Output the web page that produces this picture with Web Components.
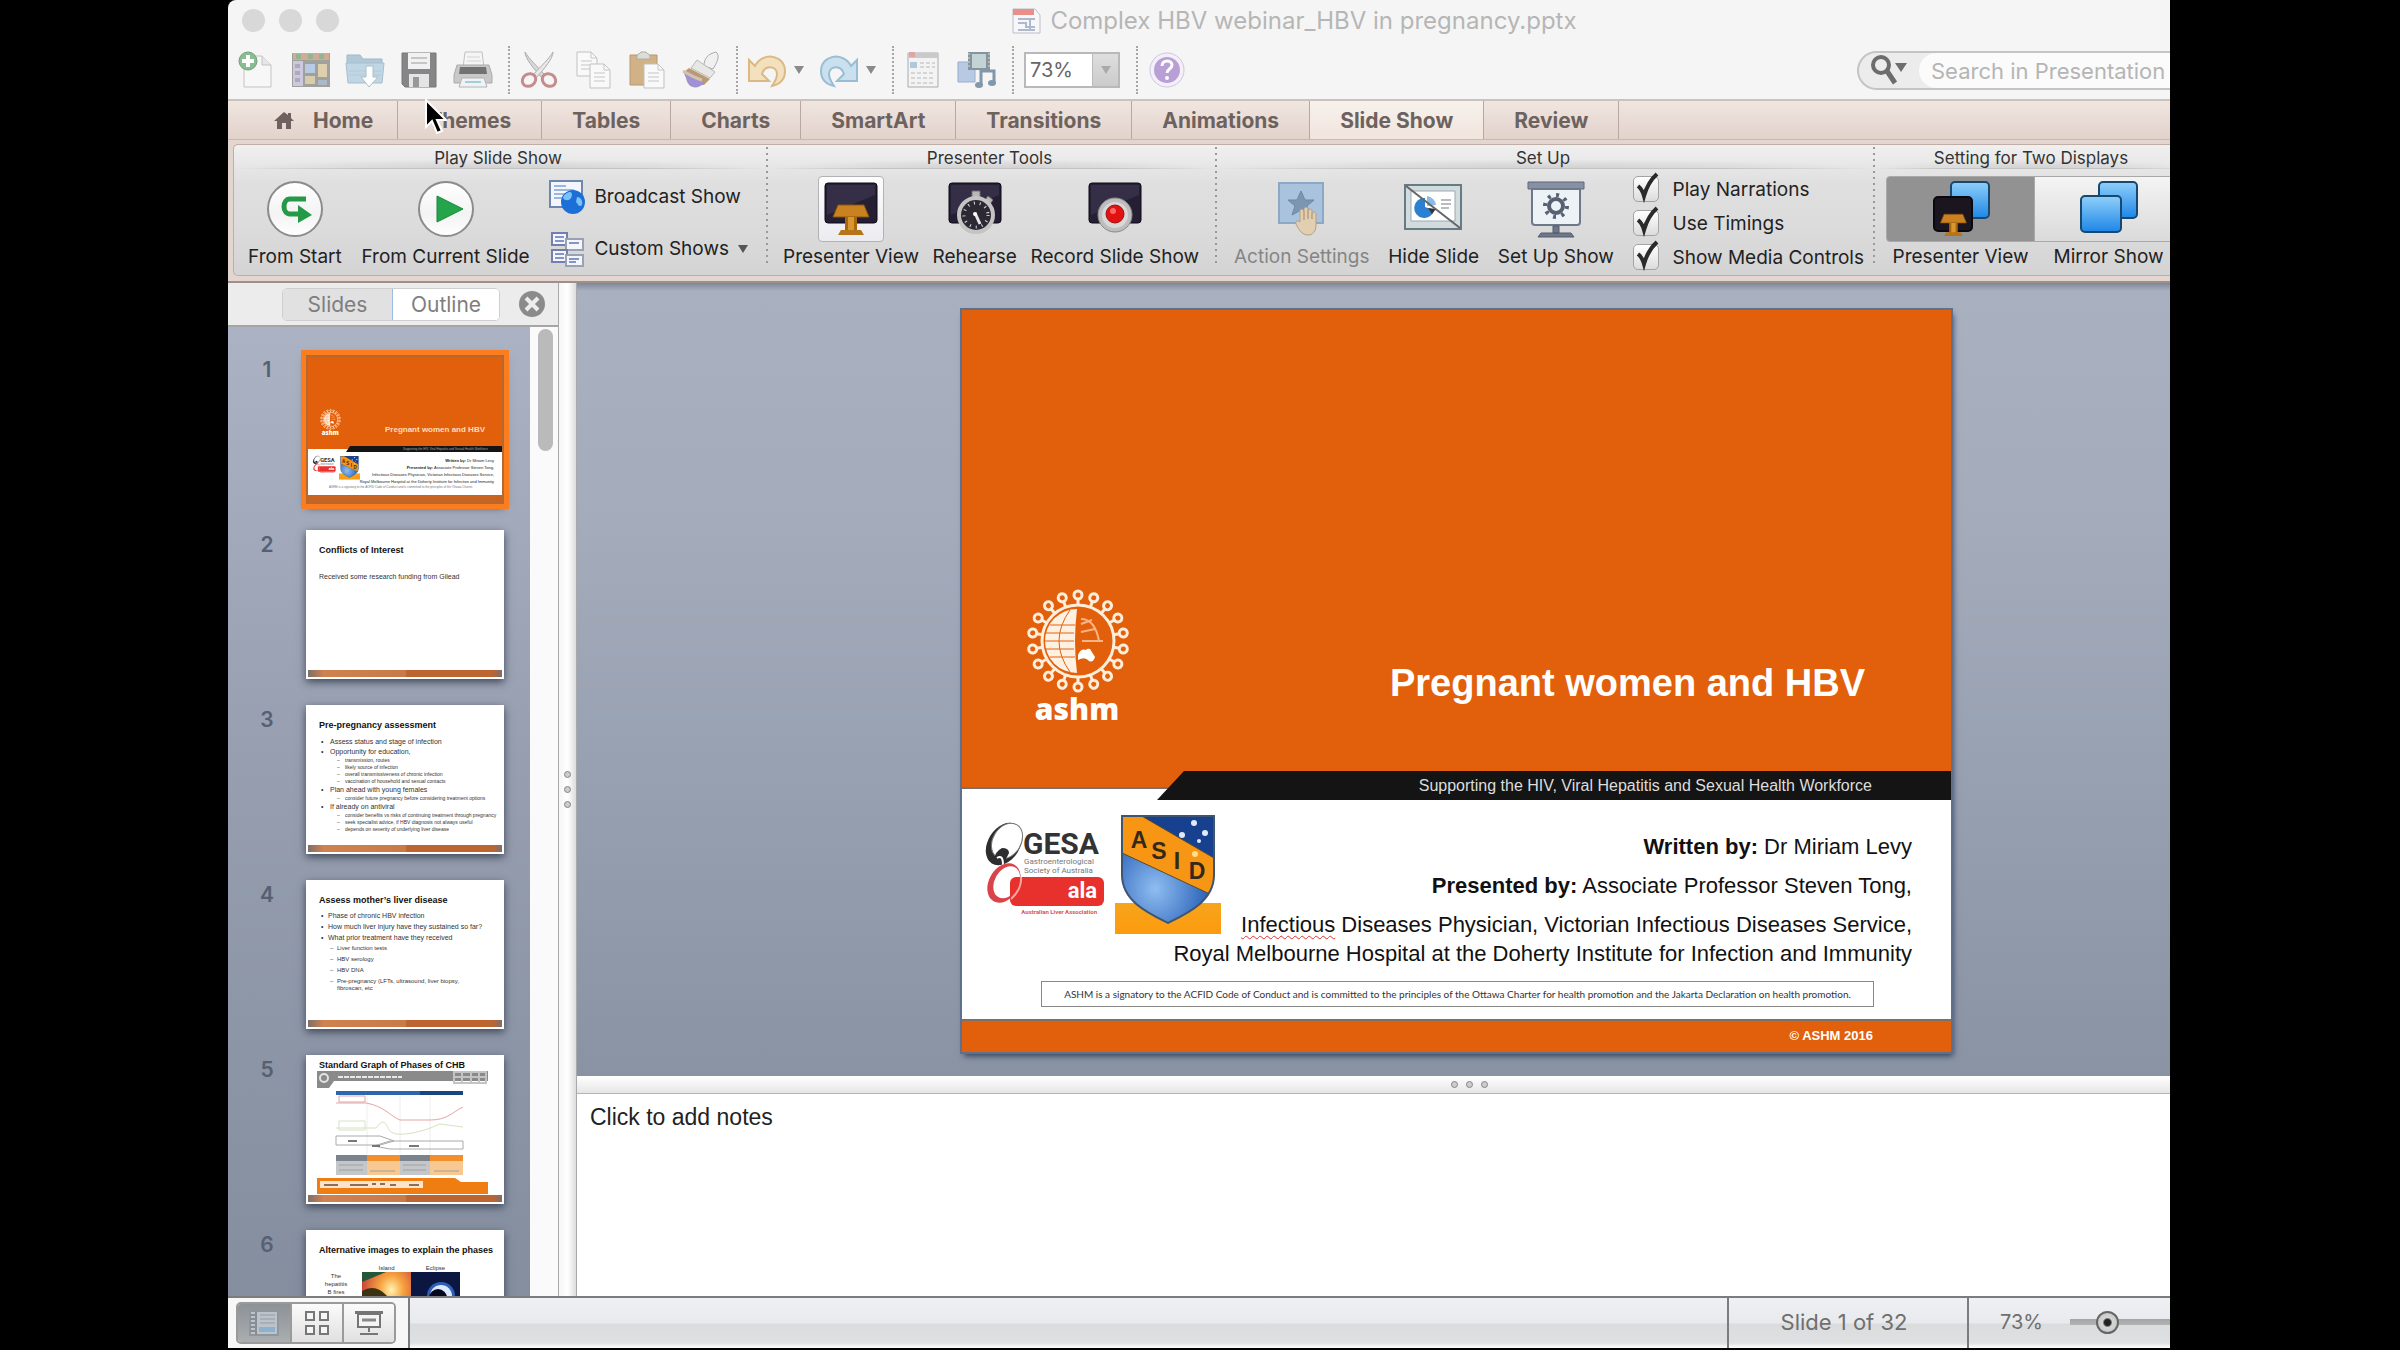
<!DOCTYPE html>
<html lang="en">
<head>
<meta charset="utf-8">
<title>Complex HBV webinar_HBV in pregnancy.pptx</title>
<style>
  body {
    margin: 0;
    background: #000;
    font-family: Inter, "Liberation Sans", sans-serif;
    --ui-size: 19px;
    --title-size: 24px;
    --status-size: 20px;
    --orange: #e2600c;
    --rule: #bfaea6;
  }
</style>
</head>
<body>
<app-window></app-window>

<script>
const define = (name, html, setup) => {
  const template = document.createElement("template");
  template.innerHTML = html;
  customElements.define(
    name,
    class extends HTMLElement {
      connectedCallback() {
        if (this.shadowRoot) return;
        this.attachShadow({ mode: "open" });
        this.shadowRoot.appendChild(template.content.cloneNode(true));
        if (setup) setup(this, this.shadowRoot);
      }
    }
  );
};

/* ---------- icons ---------- */

const podium = `
  <path d="M14 24h26l5 12H9z" fill="#c9821f" stroke="#8a5410"/>
  <path d="M21 36h12v14H21z" fill="#a9660f"/>
  <path d="M24 36h6v14h-6z" fill="#d9952e"/>
  <path d="M17 49h20l3 5H14z" fill="#b87418"/>`;
const screen = `<rect x="1" y="2" width="52" height="40" rx="3" fill="#251f33" stroke="#0f0b18"/><path d="M3 4h48v10L3 34z" fill="#3b3450" opacity=".7"/>`;
const page = (x, y) => `<path d="M${x} ${y}h14l6 6v18h-20z" fill="#fafafa" stroke="#b5b5b5"/><path d="M${x + 14} ${y}v6h6M${x + 4} ${y + 9}h11M${x + 4} ${y + 13}h11M${x + 4} ${y + 17}h11" fill="none" stroke="#bbb"/>`;
const blueScreens = `<rect x="20" y="1" width="38" height="36" rx="4" fill="url(#blue)" stroke="#19486f" stroke-width="2"/>`;
const blueDef = `<defs><linearGradient id="blue" x2="0" y2="1"><stop stop-color="#8fd0fa"/><stop offset="1" stop-color="#1e86e6"/></linearGradient></defs>`;
const disc = `<circle cx="28" cy="28" r="27" fill="url(#w)" stroke="#8b8b8b" stroke-width="2"/><defs><linearGradient id="w" x2="0" y2="1"><stop stop-color="#fff"/><stop offset=".6" stop-color="#f3f3f3"/><stop offset="1" stop-color="#fff"/></linearGradient></defs>`;

const icons = {
  doc: [29, 26, `<path d="M1 1h22l5 6v18H1z" fill="#f7f7f9" stroke="#bcbfca"/><path d="M1 1h21v6H1z" fill="#ea8f88"/><path d="M6 11h17M6 15h8v4h9M6 22h17M18 11v11" stroke="#aeb9d0" stroke-width="2" fill="none"/>`],
  newdoc: [38, 38, `<path d="M6 5h18l9 9v22H6z" fill="#f8f8f8" stroke="#b8b8b8"/><path d="M24 5v9h9" fill="#e4e4e4" stroke="#b8b8b8"/><circle cx="10" cy="10" r="9" fill="#6fae77" stroke="#4d8f58"/><path d="M10 4v12M4 10h12" stroke="#fff" stroke-width="4"/>`],
  template: [38, 38, `<path d="M0 2h38v34H0z" fill="#8b8b86"/><path d="M1 2h36v7H1z" fill="#c99a7d"/><path d="M4 3h5v5H4zM16 3h5v5h-5zM27 3h5v5h-5z" fill="#7ea37a"/><path d="M1 10h10v25H1z" fill="#c4bed8"/><path d="M3 13h5v4H3zM3 20h5v4H3zM3 27h5v4H3z" fill="#9c98b4"/><path d="M13 13h10v9H13z" fill="#a9c0e0"/><path d="M26 13h9v13h-9z" fill="#d9c79c"/><path d="M13 25h10v8H13z" fill="#d0c499"/><path d="M26 29h9v5h-9z" fill="#98a9bd"/>`],
  folder: [38, 38, `<path d="M1 8V4h13l3 4h19v5H1z" fill="#9fbdd0" stroke="#8ba9bd"/><path d="M0 12h38l-2 20H2z" fill="#b4cfe0" stroke="#93b2c6"/><path d="M3 20h32M3 24h32" stroke="#a2c0d3"/><path d="M20 15h7v11h5l-9 10-8-10h5z" fill="#fff" stroke="#9ab2c0"/>`],
  save: [38, 38, `<path d="M2 2h34v34H5l-3-3z" fill="#6b6b6d" stroke="#59595b"/><path d="M8 2h22v16H8z" fill="#f1f1f1"/><path d="M11 7h16M11 12h16" stroke="#bbb" stroke-width="2"/><path d="M9 23h20v13H9z" fill="#e0e0e0"/><path d="M13 26h6v10h-6z" fill="#808084"/>`],
  print: [38, 38, `<path d="M9 17 11 1h17l2 16z" fill="#f5f5f5" stroke="#b5b5b5"/><path d="M13 6h13M13 10h14" stroke="#ccc"/><path d="M3 14h32l3 10v8H0v-8z" fill="#bdbdbd" stroke="#999"/><path d="M6 16h26l1 7H5z" fill="#525252"/><path d="M8 27h22l3 9H5z" fill="#eef3f5" stroke="#a5a5a5"/><path d="M11 31h16" stroke="#8fc5cf" stroke-width="2"/>`],
  cut: [38, 38, `<path d="M5 1c0 6 8 16 17 26l3-3C17 15 9 8 5 1z" fill="#d2d2d2" stroke="#9b9b9b"/><path d="M33 1c0 6-8 16-17 26l-3-3C21 15 29 8 33 1z" fill="#e6e6e6" stroke="#9b9b9b"/><g fill="none" stroke="#b87473" stroke-width="3"><ellipse cx="9" cy="29" rx="7" ry="6" transform="rotate(-35 9 29)"/><ellipse cx="29" cy="29" rx="7" ry="6" transform="rotate(35 29 29)"/></g>`],
  copy: [38, 38, page(3, 1) + page(16, 13)],
  paste: [38, 38, `<path d="M2 4h27v30H2z" fill="#c9a16b" stroke="#a8814e"/><path d="M9 5c0-2 3-2 4-4h5c1 2 4 2 4 4v3H9z" fill="#d7d7d2" stroke="#a09c92"/>` + page(16, 13)],
  brush: [38, 38, `<path d="M22 15c0-8 4-12 12-14 5 4 0 12-3 17z" fill="#f0f0f0" stroke="#999"/><path d="m15 9 18 12-5 6-19-10z" fill="#e4e4e2" stroke="#aaa"/><path d="m7 17 21 11-6 6C13 34 6 27 2 21z" fill="#b08352"/><path d="M1 20c5 0 16 5 21 12-6 7-16 6-18-5z" fill="#8a79cc"/><path d="M1 20c6 3 11 7 19 9" stroke="#c9b79f" stroke-width="3" fill="none"/>`],
  undo: [38, 38, `<path d="M1 9v21h20l-7-7c3-10 15-8 15 0 0 5-2 7-5 12 9-2 13-8 13-15C37 4 15 0 7 15z" fill="#f3dcae" stroke="#d5ab68" stroke-width="2"/>`],
  redo: [38, 38, `<path d="M37 9v21H17l7-7c-3-10-15-8-15 0 0 5 2 7 5 12C5 33 1 27 1 20 1 4 23 0 31 15z" fill="#c0dced" stroke="#82b0cc" stroke-width="2"/>`],
  form: [38, 38, `<path d="M4 2h30v34H4z" fill="#f3f3f3" stroke="#999"/><path d="M4 2h30v5H4z" fill="#c0c0c0"/><path d="M5 1h6v5H5z" fill="#df8e90"/><path d="M6 11h7v6H6z" fill="#a2bcd4"/><path d="M16 12h15M16 16h15M7 22h24M7 27h24M7 32h24" stroke="#aaa" stroke-dasharray="4 2"/>`],
  media: [38, 38, `<path d="M0 11h17v20H0z" fill="#a9bfe0" stroke="#819bc4"/><path d="M10 1h22v18H10z" fill="#6b7e85"/><path d="M14 3h14v14H14z" fill="#b7ccd0"/><path d="M11 2v16M31 2v16" stroke="#cfd8da" stroke-dasharray="2 2"/><path d="M23 34V20h13v12" fill="none" stroke="#65809a" stroke-width="3"/><ellipse cx="21" cy="34" rx="4" ry="3" fill="#65809a"/><ellipse cx="34" cy="32" rx="4" ry="3" fill="#65809a"/>`],
  help: [38, 38, `<circle cx="19" cy="19" r="17" fill="#f4f0fa" stroke="#c7b9dc"/><circle cx="19" cy="19" r="13" fill="#a98ccf"/><path d="M14 15c0-7 10-6 10-1 0 4-5 4-5 8" fill="none" stroke="#fff" stroke-width="3"/><circle cx="19" cy="27" r="2" fill="#fff"/>`],
  caret: [10, 8, `<path d="M0 0h10L5 8z" fill="currentColor"/>`],
  lens: [36, 32, `<circle cx="10" cy="11" r="8" fill="none" stroke="#6d6d6d" stroke-width="4"/><path d="m16 17 8 12" stroke="#6d6d6d" stroke-width="5"/><path d="M24 9h12l-6 9z" fill="#6d6d6d"/>`],
  home: [20, 17, `<path d="M10 0 0 9h3v8h5v-6h4v6h5V9h3l-3-3V1h-3v2z" fill="currentColor"/>`],
  start: [56, 56, disc + `<path d="M39 18H23c-8 0-8 15 0 15h9" fill="none" stroke="#249a49" stroke-width="5"/><path d="m31 24 14 10-14 8z" fill="#249a49"/>`],
  play: [56, 56, disc + `<path d="M19 15v26l26-13z" fill="#24a54b" stroke="#1b8740"/>`],
  broadcast: [36, 36, `<path d="M1 2h32v26H1z" fill="#f3f7fd" stroke="#6f86ad" stroke-width="2"/><path d="M5 7h12M5 11h20M5 15h16M5 19h10" stroke="#9db6dd" stroke-width="2"/><circle cx="24" cy="23" r="12" fill="#1c6fd6"/><path d="M18 14c5-3 6 2 4 5s-6 3-8 0c0-2 2-4 4-5zM28 18c4 0 6 4 5 8-3 3-4-1-6-3z" fill="#7cc3f5"/>`],
  custom: [36, 36, `<g fill="#f4f6fb" stroke="#7180b0" stroke-width="2"><path d="M3 2h15v12H3z"/><path d="M17 8h17v11H17z" stroke="#9aa1b4"/><path d="M3 19h15v12H3z"/><path d="M17 24h17v11H17z" stroke="#9aa1b4"/></g><path d="M6 6h9M6 10h9M6 23h9M6 27h9M20 12h10M20 28h10M20 31h7" stroke="#8495c8" stroke-width="2"/>`],
  presenter: [54, 56, screen + podium],
  rehearse: [54, 56, screen + `<g><path d="M24 10h8v6h-8zM40 15l5 4-3 4-5-4z" fill="#b8b8b8" stroke="#6f6f6f"/><circle cx="28" cy="34" r="17" fill="#2c2935" stroke="#c4c4c4" stroke-width="4"/><circle cx="28" cy="34" r="12" fill="none" stroke="#ddd" stroke-width="3" stroke-dasharray="1 5"/><path d="m27 32 5 11" stroke="#e8e8e8" stroke-width="3"/><circle cx="27" cy="33" r="2" fill="#fff"/></g>`],
  record: [54, 56, screen + `<circle cx="27" cy="34" r="17" fill="#bdbdbd" stroke="#8b8b8b"/><circle cx="27" cy="34" r="13" fill="#d8d8d8"/><circle cx="27" cy="33" r="9" fill="#e01212" stroke="#a30c0c"/><circle cx="25" cy="30" r="3" fill="#f66"/>`],
  action: [48, 56, `<path d="M1 2h44v40H1z" fill="#a9c3de" stroke="#8ba8c4" stroke-width="2"/><path d="m23 10 4 9h9l-7 6 3 9-9-5-9 5 3-9-7-6h9z" fill="#7c95b2" stroke="#6f87a1"/><path d="M22 29c2-2 4 0 4 3v7-11c1-3 4-2 4 0v10-8c1-3 4-2 4 0v8-5c1-3 4-2 4 0v11c0 6-3 10-8 10-6 0-9-5-12-11-1-3 2-4 4-2z" fill="#e2ceb0" stroke="#b59f80"/>`],
  hide: [60, 52, `<path d="M1 2h56v44H1z" fill="#d2dbdd" stroke="#667b83" stroke-width="2"/><path d="M7 8h44v30H7z" fill="#fff" stroke="#98a9b0"/><path d="M21 15a10 10 0 1 0 9 12l-9-3z" fill="#2d7fd1"/><path d="M23 13a10 10 0 0 1 9 9l-9 1z" fill="#8bbbe6"/><path d="m24 25 8 1-4 5z" fill="#333"/><path d="M37 17h10M37 21h10M37 25h8" stroke="#bbb" stroke-width="2"/><path d="m2 3 54 42" stroke="#666" stroke-width="2"/>`],
  setup: [60, 58, `<path d="M2 2h56v7H2z" fill="#8791a6" stroke="#5e677a"/><path d="M6 9h48v33q0 3-3 3H9q-3 0-3-3z" fill="#edf2f7" stroke="#6e788b" stroke-width="2"/><circle cx="30" cy="26" r="7" fill="none" stroke="#586072" stroke-width="4"/><circle cx="30" cy="26" r="11" fill="none" stroke="#586072" stroke-width="4" stroke-dasharray="3 5.6"/><path d="M27 46h6v7h-6zM15 53h30l3 4H12z" fill="#6e788b" stroke="#555d6d"/>`],
  dual: [60, 56, blueDef + blueScreens + `<rect x="3" y="16" width="38" height="34" rx="4" fill="#1b1520" stroke="#0b0810" stroke-width="2"/><g transform="translate(3 16) scale(.72)">${podium}</g>`],
  mirror: [60, 56, blueDef + blueScreens + `<rect x="2" y="15" width="40" height="36" rx="4" fill="url(#blue)" stroke="#19486f" stroke-width="2"/>`],
  close: [28, 28, `<circle cx="14" cy="14" r="13" fill="#8b8b8b"/><path d="m8 8 12 12M20 8 8 20" stroke="#ededed" stroke-width="4"/>`],
  normal: [30, 26, `<path d="M1 1h28v24H1z" fill="#bdc3c8" stroke="#8f979e" stroke-width="2"/><path d="M7 1v24M1 5h6M1 9h6M1 13h6M1 17h6M1 21h6" stroke="#868e95" stroke-width="2"/><path d="M11 5h15M11 9h15M11 13h15" stroke="#949ca3"/><path d="M10 17h16v5H10z" fill="#8bb2cf"/>`],
  sorter: [26, 26, `<path d="M2 2h8v8H2zM16 2h8v8h-8zM2 16h8v8H2zM16 16h8v8h-8z" fill="#f5f5f5" stroke="#777" stroke-width="2"/>`],
  show: [30, 26, `<path d="M1 1h28v3H1z" fill="#757575"/><path d="M4 4h22v13H4z" fill="#f5f5f5" stroke="#757575" stroke-width="2"/><path d="M8 10h14" stroke="#888" stroke-width="3"/><path d="M15 17v5M6 24h18" stroke="#757575" stroke-width="2"/>`],
  check: [30, 30, `<path d="M5 14q4 3 6 10Q15 10 24 2" fill="none" stroke="#2a2a2a" stroke-width="4"/>`]
};

define("ui-icon", `
  <style>
    :host { display: inline-flex; flex: none; }
    svg { display: block; overflow: visible; }
  </style>
  <svg aria-hidden="true"></svg>
`, (host, root) => {
  const [w, h, body] = icons[host.getAttribute("name")];
  const svg = root.querySelector("svg");
  svg.setAttribute("viewBox", `0 0 ${w} ${h}`);
  svg.setAttribute("width", w);
  svg.setAttribute("height", h);
  svg.innerHTML = body;
});

// puts the host's icon into the element's .icon box
const addIcon = (host, root) => {
  const icon = document.createElement("ui-icon");
  icon.setAttribute("name", host.getAttribute("icon"));
  root.querySelector(".icon").append(icon);
};

/* ---------- logos ---------- */

const spikes = Array.from({ length: 18 }, (_, i) =>
  `<g transform="rotate(${i * 20} 52 52)"><path d="M52 16v-6" stroke-width="3"/><circle cx="52" cy="6" r="4"/></g>`
).join("");

define("ashm-logo", `
  <style>
    :host { display: block; width: 104px; }
    svg { display: block; width: 100%; overflow: visible; }
    text { font: 800 30px "Open Sans", sans-serif; fill: #fff; }
  </style>
  <svg viewBox="0 0 104 138">
    <g fill="none" stroke="#ffeeda" stroke-width="3">${spikes}<circle cx="52" cy="52" r="36"/></g>
    <path d="M51 20a32 32 0 0 0 0 64q-4-32 0-64z" fill="#fff1e2"/>
    <g fill="none" stroke="#e2600c">
      <path d="M44 21q-22 31 0 62M24 36h25M20 44h28M19 52h29M20 60h28M24 68h25"/>
    </g>
    <path d="M55 30q14 0 18 22M55 35l11-4M55 43l14-3M56 52h21" fill="none" stroke="#f7b486" stroke-width="2"/>
    <path d="M52 66q3-7 8-5 1-2 4-1l5 8q-2 6-6 4-4-5-11-1z" fill="#fff"/>
    <text x="51" y="131" text-anchor="middle">ashm</text>
  </svg>
`);

define("gesa-logo", `
  <style>
    :host { display: block; width: 121px; }
    svg { display: block; width: 100%; overflow: visible; }
    text { font-family: Roboto, sans-serif; }
  </style>
  <svg viewBox="0 0 121 94">
    <ellipse cx="19" cy="21" rx="16" ry="23" transform="rotate(32 19 21)" fill="#2d2d2f"/>
    <ellipse cx="22" cy="18" rx="14" ry="19" transform="rotate(32 22 18)" fill="#fff" stroke="#777"/>
    <path d="M9 38q0-9 8-13 7 0 7 5-4 9-9 12z" fill="#2d2d2f"/>
    <path d="M12 35q6-4 6 7" stroke="#fff" stroke-width="2" fill="none"/>
    <path fill-rule="evenodd" transform="rotate(30 19 60)" d="M4 60a15 21 0 1 0 30 0a15 21 0 1 0-30 0zM9 58a12 17 0 1 0 24 0a12 17 0 1 0-24 0z" fill="#d9434a"/>
    <rect x="25" y="54" width="94" height="29" rx="6" fill="#e8302c"/>
    <path d="M36 54q1 12-10 22" stroke="#f5a6a0" stroke-width="2" fill="none"/>
    <text x="38" y="31" font-size="30" font-weight="700" fill="#333">GESA</text>
    <text x="39" y="41" font-size="8" fill="#777">Gastroenterological</text>
    <text x="39" y="50" font-size="8" fill="#777">Society of Australia</text>
    <text x="112" y="75" font-size="22" font-weight="700" text-anchor="end" fill="#fff">ala</text>
    <text x="112" y="91" font-size="6" font-weight="700" text-anchor="end" fill="#d9534f">Australian Liver Association</text>
  </svg>
`);

define("asid-logo", `
  <style>
    :host { display: block; width: 106px; }
    svg { display: block; width: 100%; }
    text { font: bold 23px "Liberation Sans", sans-serif; text-anchor: middle; fill: #33291a; }
  </style>
  <svg viewBox="0 0 106 119">
    <defs>
      <radialGradient id="sea" cx=".38" cy=".62" r=".5"><stop stop-color="#8fbdf0"/><stop offset="1" stop-color="#2c63ba"/></radialGradient>
      <linearGradient id="sand" x2="0" y2="1"><stop stop-color="#f6a51c"/><stop offset="1" stop-color="#fd9a0e"/></linearGradient>
      <clipPath id="shield"><path d="M7 0h92v60c0 26-26 38-46 48C33 98 7 86 7 60z"/></clipPath>
    </defs>
    <path d="M0 88h106v31H0z" fill="url(#sand)"/>
    <g clip-path="url(#shield)">
      <path d="M0 0h106v119H0z" fill="url(#sea)"/>
      <path d="M7 0h92v45z" fill="#17408f"/>
      <path d="M7 0h18l74 43v38L7 38z" fill="#f79514" stroke="#574a2e"/>
    </g>
    <path d="M7 1h92v59c0 26-26 38-46 48C33 98 7 86 7 60z" fill="none" stroke="#3d5570" stroke-width="2"/>
    <g fill="#dfeaff"><circle cx="79" cy="8" r="3"/><circle cx="67" cy="20" r="3"/><circle cx="90" cy="18" r="3"/><circle cx="84" cy="26" r="2"/></g>
    <circle cx="80" cy="39" r="3" fill="#ffe08a"/>
    <text x="24" y="33">A</text><text x="44" y="44">S</text><text x="62" y="54">I</text><text x="82" y="64">D</text>
  </svg>
`);

/* ---------- title bar and toolbar ---------- */

define("title-bar", `
  <style>
    :host { display: flex; align-items: center; height: 41px; padding-left: 14px; }
    .lights { display: flex; gap: 14px; }
    .lights button { width: 23px; height: 23px; padding: 0; border: 0; border-radius: 50%; background: #d8d8d8; }
    .title { flex: 1; display: flex; justify-content: center; align-items: center; gap: 9px; padding-left: 80px; font-size: var(--title-size); color: #b6b6b6; }
  </style>
  <div class="lights">
    <button aria-label="Close"></button><button aria-label="Minimize"></button><button aria-label="Zoom"></button>
  </div>
  <div class="title"><ui-icon name="doc"></ui-icon><slot></slot></div>
`);

define("tool-group", `
  <style>
    :host { display: flex; align-items: center; gap: 16px; height: 48px; padding: 0 16px 0 10px; border-right: 2px dotted #a5a5a5; }
    :host([last]) { border: 0; }
  </style>
  <slot></slot>
`);

define("tool-button", `
  <style>
    :host { display: flex; align-items: center; gap: 8px; color: #8a8a8a; }
    button { display: flex; padding: 0; border: 0; background: none; color: inherit; }
    .icon { opacity: .8; }
    .more { display: none; }
    :host([menu]) .more { display: flex; }
  </style>
  <button class="icon"></button>
  <button class="more" aria-label="More"><ui-icon name="caret"></ui-icon></button>
`, (host, root) => {
  addIcon(host, root);
  root.querySelector(".icon").setAttribute("aria-label", host.getAttribute("icon"));
});

define("zoom-box", `
  <style>
    :host { display: flex; width: 96px; height: 36px; box-sizing: border-box; border: 2px solid #b9b9b9; }
    input { flex: 1; min-width: 0; padding: 0 4px; border: 0; background: #fff; font: 20px Inter, sans-serif; color: #666; }
    button { display: grid; place-items: center; width: 26px; padding: 0; border: 0; border-left: 1px solid #bbb; background: linear-gradient(#dedede, #cbcbcb); color: #aaa; }
  </style>
  <input type="text" value="73%" aria-label="Zoom level">
  <button aria-label="Zoom levels"><ui-icon name="caret"></ui-icon></button>
`);

define("search-box", `
  <style>
    :host { display: flex; width: 313px; height: 39px; box-sizing: border-box; margin-left: auto; border: 2px solid #c4c4c4; border-right: 0; border-radius: 20px 0 0 20px; background: #ececec; overflow: hidden; }
    button { display: grid; place-items: center; width: 60px; padding: 0; border: 0; background: none; }
    input { flex: 1; min-width: 0; padding: 2px 0 0 12px; border: 0; border-radius: 18px 0 0 18px; background: #fbfbfb; font: 22px Inter, sans-serif; }
    input::placeholder { color: #b5b5b5; opacity: 1; }
  </style>
  <button aria-label="Search options"><ui-icon name="lens"></ui-icon></button>
  <input type="text" placeholder="Search in Presentation" aria-label="Search in Presentation">
`);

define("tool-bar", `
  <style>
    :host { display: flex; align-items: center; height: 58px; }
    tool-group:first-child { padding-left: 9px; }
  </style>
  <tool-group>
    <tool-button icon="newdoc"></tool-button><tool-button icon="template"></tool-button><tool-button icon="folder"></tool-button><tool-button icon="save"></tool-button><tool-button icon="print"></tool-button>
  </tool-group>
  <tool-group>
    <tool-button icon="cut"></tool-button><tool-button icon="copy"></tool-button><tool-button icon="paste"></tool-button><tool-button icon="brush"></tool-button>
  </tool-group>
  <tool-group>
    <tool-button icon="undo" menu></tool-button><tool-button icon="redo" menu></tool-button>
  </tool-group>
  <tool-group><tool-button icon="form"></tool-button><tool-button icon="media"></tool-button></tool-group>
  <tool-group><zoom-box></zoom-box></tool-group>
  <tool-group last><tool-button icon="help"></tool-button></tool-group>
  <search-box></search-box>
`);

/* ---------- ribbon ---------- */

define("ribbon-tab", `
  <style>
    :host { display: block; border-right: 1px solid #b9a8a1; }
    button { display: flex; align-items: center; gap: 19px; height: 100%; padding: 0 30px; border: 0; background: none; font: 700 21px Inter, sans-serif; color: #6d625e; }
    :host([home]) button { padding: 0 24px 0 46px; }
    :host([active]) { background: linear-gradient(#f7f1ec, #f1e5dd); }
  </style>
  <button role="tab"><slot></slot></button>
`);

define("ribbon-group", `
  <style>
    :host { display: flex; flex-direction: column; box-sizing: border-box; flex: none; width: var(--w); }
    h2 { margin: 0; height: 24px; padding-right: 6px; text-align: center; font: 400 17px/26px Inter, sans-serif; color: #333; background: linear-gradient(90deg, transparent, #c3c3c3 25%, #c3c3c3 75%, transparent) bottom / 100% 1px no-repeat, radial-gradient(ellipse at bottom, #cfcfcf, transparent 70%) bottom / 100% 10px no-repeat; }
    .row { display: flex; justify-content: space-between; margin: 7px 0 0; height: 93px; padding: 0 var(--pad-r) 0 var(--pad-l); }
    :host(:not([last])) { background: radial-gradient(circle, #999 1px, transparent 1px) right 12px / 2px 6px repeat-y; background-clip: content-box; padding-bottom: 8px; }
  </style>
  <h2></h2>
  <div class="row"><slot></slot></div>
`, (host, root) => {
  root.querySelector("h2").textContent = host.getAttribute("heading");
});

define("ribbon-button", `
  <style>
    :host { display: block; }
    button { display: flex; flex-direction: column; align-items: center; gap: 3px; padding: 0; border: 0; background: none; font: var(--ui-size)/24px Inter, sans-serif; color: #222; white-space: nowrap; }
    .icon { display: grid; place-items: center; box-sizing: border-box; min-width: 66px; height: 66px; }
    :host([framed]) .icon { border: 1px solid #b3b3b3; border-radius: 4px; background: linear-gradient(#fdfdfd, #ececf0); }
    :host([disabled]) button { color: #858585; }
    :host([segment]) .icon { width: 149px; border: 1px solid #a9a9a9; background: linear-gradient(#f4f4f4, #dadada); }
    :host([segment]) { margin-left: -1px; }
    :host([segment][on]) .icon { border-radius: 4px 0 0 4px; background: #929292; }
  </style>
  <button><span class="icon"></span><span><slot></slot></span></button>
`, addIcon);

define("ribbon-link", `
  <style>
    :host { display: block; }
    button { display: flex; align-items: center; gap: 9px; padding: 0; border: 0; background: none; font: var(--ui-size)/24px Inter, sans-serif; color: #222; white-space: nowrap; }
    .icon { display: flex; }
    .more { display: none; color: #555; }
    :host([menu]) .more { display: inline-flex; }
  </style>
  <button><span class="icon"></span><slot></slot><ui-icon class="more" name="caret"></ui-icon></button>
`, addIcon);

define("ribbon-check", `
  <style>
    :host { display: block; }
    label { display: flex; align-items: center; gap: 14px; height: 34px; font-size: var(--ui-size); color: #222; white-space: nowrap; }
    .box { display: grid; width: 26px; height: 26px; }
    .box > * { grid-area: 1 / 1; }
    input { appearance: none; box-sizing: border-box; width: 26px; height: 26px; margin: 0; border: 1px solid #a3a3a3; border-radius: 5px; background: linear-gradient(#fff, #dcdcdc); }
    ui-icon { margin-top: -4px; pointer-events: none; visibility: hidden; }
    input:checked + ui-icon { visibility: visible; }
  </style>
  <label><span class="box"><input type="checkbox" checked><ui-icon name="check"></ui-icon></span><slot></slot></label>
`);

define("app-ribbon", `
  <style>
    :host { display: block; background: #e3d6d0; border-top: 2px solid #cdc1bb; border-bottom: 2px solid #a08f88; overflow: hidden; }
    nav { display: flex; height: 38px; background: linear-gradient(#f0e6e1, #e2d2ca); border-bottom: 1px solid #cbb8af; }
    .panel { display: flex; height: 132px; margin: 4px 0 5px 5px; border: 1px solid var(--rule); border-right: 0; border-radius: 5px 0 0 5px; background: linear-gradient(#f0f0f0, #dfdfdf 30%, #dcdcdc 60%, #d4d4d4); overflow: hidden; box-sizing: border-box; }
    .stack { display: flex; flex-direction: column; gap: 16px; padding-top: 3px; }
    .checks { display: flex; flex-direction: column; margin-top: -4px; }
    .pair { display: flex; }
  </style>
  <nav role="tablist">
    <ribbon-tab home><ui-icon name="home"></ui-icon>Home</ribbon-tab><ribbon-tab>Themes</ribbon-tab><ribbon-tab>Tables</ribbon-tab><ribbon-tab>Charts</ribbon-tab><ribbon-tab>SmartArt</ribbon-tab><ribbon-tab>Transitions</ribbon-tab><ribbon-tab>Animations</ribbon-tab><ribbon-tab active>Slide Show</ribbon-tab><ribbon-tab>Review</ribbon-tab>
  </nav>
  <div class="panel">
    <ribbon-group heading="Play Slide Show" style="--w: 534px; --pad-l: 14px; --pad-r: 20px">
      <ribbon-button icon="start">From Start</ribbon-button>
      <ribbon-button icon="play">From Current Slide</ribbon-button>
      <div class="stack">
        <ribbon-link icon="broadcast">Broadcast Show</ribbon-link>
        <ribbon-link icon="custom" menu>Custom Shows</ribbon-link>
      </div>
    </ribbon-group>
    <ribbon-group heading="Presenter Tools" style="--w: 449px; --pad-l: 15px; --pad-r: 18px">
      <ribbon-button icon="presenter" framed>Presenter View</ribbon-button>
      <ribbon-button icon="rehearse">Rehearse</ribbon-button>
      <ribbon-button icon="record">Record Slide Show</ribbon-button>
    </ribbon-group>
    <ribbon-group heading="Set Up" style="--w: 658px; --pad-l: 17px; --pad-r: 11px">
      <ribbon-button icon="action" disabled>Action Settings</ribbon-button>
      <ribbon-button icon="hide">Hide Slide</ribbon-button>
      <ribbon-button icon="setup">Set Up Show</ribbon-button>
      <div class="checks">
        <ribbon-check>Play Narrations</ribbon-check>
        <ribbon-check>Use Timings</ribbon-check>
        <ribbon-check>Show Media Controls</ribbon-check>
      </div>
    </ribbon-group>
    <ribbon-group last heading="Setting for Two Displays" style="--w: 318px; --pad-l: 12px; --pad-r: 0px">
      <div class="pair">
        <ribbon-button icon="dual" segment on>Presenter View</ribbon-button>
        <ribbon-button icon="mirror" segment>Mirror Show</ribbon-button>
      </div>
    </ribbon-group>
  </div>
`);

/* ---------- slide panel ---------- */

define("slide-thumb", `
  <style>
    :host { display: grid; grid-template-columns: 78px 198px; }
    b { text-align: center; font: 600 21px/30px Inter, sans-serif; color: #566073; }
    .card { display: flex; flex-direction: column; height: 149px; box-sizing: border-box; background: #fff; padding: 2px; box-shadow: 0 3px 8px #3d4658; overflow: hidden; }
    .body { flex: 1; min-height: 0; }
    .foot { height: 7px; background: linear-gradient(90deg, #7d6f6a, #cf8150 8%, #c97a49 50%, #bd6531 51%, #bd6531 95%, #7d6f6a); }
    :host([selected]) .card { outline: 5px solid #fb7d1d; background: #b5682f; }
    :host([selected]) .foot { background: #c8641f; }
  </style>
  <b></b>
  <div class="card"><div class="body"><slot></slot></div><div class="foot"></div></div>
`, (host, root) => {
  root.querySelector("b").textContent = host.getAttribute("number");
});

define("slide-panel", `
  <style>
    :host { display: grid; grid-template-rows: 44px 1fr; min-height: 0; font-family: "Liberation Sans", sans-serif; }
    header { display: flex; align-items: center; justify-content: flex-end; gap: 18px; padding-right: 12px; background: #ececec; border-bottom: 2px solid #a5a5a8; }
    .tabs { display: flex; border: 1px solid #cfcfcf; border-radius: 5px; background: #fff; overflow: hidden; }
    .tabs button { width: 106px; height: 31px; padding: 0; border: 0; background: #fff; font: 21px Inter, sans-serif; color: #7e7e7e; }
    .tabs button:first-child { width: 110px; background: #e1e1e1; border-right: 1px solid #9dbbe6; }
    .close { display: flex; padding: 0; border: 0; background: none; }
    .view { display: grid; grid-template-columns: 1fr 28px; min-height: 0; }
    .list { display: flex; flex-direction: column; gap: 26px; min-height: 0; padding-top: 28px; overflow: hidden; background: linear-gradient(#abb2c3, #969eaf 45%, #848e9f); }
    .track { padding: 2px 5px 0 8px; background: #fafafa; }
    .thumb { height: 122px; border-radius: 8px; background: #bababa; }
    h3 { margin: 12px 0 0 11px; font-size: 9px; line-height: 12px; white-space: nowrap; color: #111; }
    p { margin: 16px 0 0 11px; font-size: 7px; line-height: 10px; color: #333; }
    ul { list-style: none; margin: 6px 0 0 13px; padding: 0; font-size: 7px; line-height: 10px; color: #333; white-space: nowrap; }
    li { padding-left: 9px; text-indent: -9px; }
    li::before { content: "•"; display: inline-block; width: 9px; text-indent: 0; }
    .sub { padding-left: 24px; font-size: 5px; line-height: 7px; text-indent: -8px; }
    .sub::before { content: "–"; width: 8px; }
    .wide { margin-top: 4px; }
    .wide li { line-height: 11px; padding-left: 7px; text-indent: -7px; }
    .wide li::before { width: 7px; }
    .wide .sub { font-size: 6px; padding: 0 40px 0 16px; white-space: normal; }
    .wide .sub:last-child { line-height: 7px; padding-top: 2px; }
    .cover { display: grid; grid-template-rows: 92px 1fr; height: 100%; background: #fff; }
    .cover .top { display: flex; justify-content: space-between; align-items: flex-end; padding: 0 17px 12px 12px; background: var(--orange); color: #ffdcb8; font-weight: bold; font-size: 8px; line-height: 14px; }
    .cover ashm-logo { width: 21px; }
    .cover .low { display: grid; position: relative; }
    .cover .bar { position: absolute; top: -3px; left: 38px; right: 0; height: 6px; background: #141414; clip-path: polygon(4px 0, 100% 0, 100% 100%, 0 100%); text-align: right; padding-right: 14px; color: #aaa; font-size: 3px; line-height: 6px; }
    .cover .logos, .cover .lines { grid-area: 1 / 1; }
    .cover .logos { display: flex; gap: 3px; padding: 7px 5px; }
    .cover gesa-logo { width: 23px; }
    .cover asid-logo { width: 21px; }
    .cover .lines { padding: 8px 8px 0 0; text-align: right; font-size: 4px; line-height: 7px; color: #222; white-space: nowrap; }
    .cover small { display: block; font-size: 3px; line-height: 5px; text-align: center; color: #777; }
    .chart { display: block; width: 194px; height: 124px; margin-top: -1px; }
    .chart-title { margin-top: 2px; }
    .six { display: grid; grid-template-columns: 52px 49px 49px; margin: 8px 0 0 2px; text-align: center; font-size: 6px; line-height: 8px; color: #333; }
    .six svg { display: block; width: 49px; height: 60px; }
  </style>
  <header>
    <div class="tabs" role="tablist"><button role="tab">Slides</button><button role="tab">Outline</button></div>
    <button class="close" aria-label="Close panel"><ui-icon name="close"></ui-icon></button>
  </header>
  <div class="view">
    <div class="list">
      <slide-thumb number="1" selected>
        <div class="cover">
          <div class="top"><ashm-logo></ashm-logo><span>Pregnant women and HBV</span></div>
          <div class="low">
            <div class="bar">Supporting the HIV, Viral Hepatitis and Sexual Health Workforce</div>
            <div class="logos"><gesa-logo></gesa-logo><asid-logo></asid-logo></div>
            <div class="lines"><b>Written by:</b> Dr Miriam Levy<br><b>Presented by:</b> Associate Professor Steven Tong,<br>Infectious Diseases Physician, Victorian Infectious Diseases Service,<br>Royal Melbourne Hospital at the Doherty Institute for Infection and Immunity
            <small>ASHM is a signatory to the ACFID Code of Conduct and is committed to the principles of the Ottawa Charter.</small></div>
          </div>
        </div>
      </slide-thumb>
      <slide-thumb number="2"><h3>Conflicts of Interest</h3><p>Received some research funding from Gilead</p></slide-thumb>
      <slide-thumb number="3">
        <h3>Pre-pregnancy assessment</h3>
        <ul>
          <li>Assess status and stage of infection</li>
          <li>Opportunity for education,</li>
          <li class="sub">transmission, routes</li>
          <li class="sub">likely source of infection</li>
          <li class="sub">overall transmissiveness of chronic infection</li>
          <li class="sub">vaccination of household and sexual contacts</li>
          <li>Plan ahead with young females</li>
          <li class="sub">consider future pregnancy before considering treatment options</li>
          <li>If already on antiviral</li>
          <li class="sub">consider benefits vs risks of continuing treatment through pregnancy</li>
          <li class="sub">seek specialist advice, if HBV diagnosis not always useful</li>
          <li class="sub">depends on severity of underlying liver disease</li>
        </ul>
      </slide-thumb>
      <slide-thumb number="4">
        <h3>Assess mother’s liver disease</h3>
        <ul class="wide">
          <li>Phase of chronic HBV infection</li>
          <li>How much liver injury have they sustained so far?</li>
          <li>What prior treatment have they received</li>
          <li class="sub">Liver function tests</li>
          <li class="sub">HBV serology</li>
          <li class="sub">HBV DNA</li>
          <li class="sub">Pre-pregnancy (LFTs, ultrasound, liver biopsy, fibroscan, etc</li>
        </ul>
      </slide-thumb>
      <slide-thumb number="5">
        <h3 class="chart-title">Standard Graph of Phases of CHB</h3>
        <svg class="chart" viewBox="2 15 194 124">
          <path d="M11 16h171v10H28l-5 7H11z" fill="#8a8a8a"/>
          <circle cx="18" cy="23" r="4" fill="none" stroke="#e3e3e3" stroke-width="2"/>
          <path d="M32 22h64" stroke="#e8e8e8" stroke-width="2" stroke-dasharray="5 1"/>
          <path d="M148 17h32v11h-32zM156 17v11M165 17v11M173 17v11M148 22h32" fill="none" stroke="#c4c4c4" stroke-width="2"/>
          <path d="M30 36h127v4H30z" fill="#2c66ad"/><path d="M114 36h43v4h-43z" fill="#184680"/>
          <path d="M61 40v59M94 40v59M124 40v59" stroke="#eee"/>
          <path d="M33 41h26v6H33zM30 48h30c18 3 24 13 34 17h30c18 0 22-8 33-13" fill="none" stroke="#e8a3a3"/>
          <path d="M33 66h26v9H33zM30 73h40q8-12 12 0t40 1l12-5 23 3" fill="none" stroke="#d5e3c2"/>
          <path d="M30 81h44l14 5-14 4H30zM68 91l16-5h73v8H84z" fill="none" stroke="#aaa"/>
          <path d="M42 86h9M66 91h8M103 91h10" stroke="#777" stroke-width="2"/>
          <path d="M30 100h31v20H30zM94 100h30v20H94z" fill="#c3c7cb"/><path d="M61 100h33v20H61zM124 100h33v20h-33z" fill="#f7c890"/>
          <path d="M30 100h31v6H30zM94 100h30v6H94z" fill="#7c838c"/><path d="M61 100h33v6H61zM124 100h33v6h-33z" fill="#f08f2c"/>
          <path d="M33 110h24M33 115h24M64 116h25M97 110h23M97 115h23M128 116h25" stroke="#a79f98"/>
          <path d="M11 123h138l6 4h27v12H11z" fill="#f07d12"/>
          <path d="M14 126h103v7H14z" fill="#fbe3cc"/>
          <path d="M18 130h14M44 130h18M66 129h4M74 129h5M84 130h6M103 130h10" stroke="#8c6f5b" stroke-width="2"/>
        </svg>
      </slide-thumb>
      <slide-thumb number="6">
        <h3>Alternative images to explain the phases</h3>
        <div class="six">
          <span></span><span>Island</span><span>Eclipse</span>
          <span>The<br>hepatitis<br>B fires</span>
          <svg viewBox="0 0 49 60" preserveAspectRatio="none">
            <defs><radialGradient id="sun" cx=".6" cy=".3" r=".6"><stop stop-color="#fff3b0"/><stop offset=".4" stop-color="#f7a440"/><stop offset="1" stop-color="#c9483a"/></radialGradient></defs>
            <path d="M0 0h49v60H0z" fill="url(#sun)"/><path d="M0 0h24L0 10z" fill="#24563a"/><path d="M0 19q14-8 26 6v35H0z" fill="#3b3213"/>
          </svg>
          <svg viewBox="0 0 49 60" preserveAspectRatio="none">
            <path d="M0 0h49v60H0z" fill="#0b1740"/><circle cx="30" cy="24" r="14" fill="#2d5fb8"/><circle cx="30" cy="24" r="11" fill="#dceaff"/><circle cx="27" cy="26" r="9" fill="#05081c"/>
          </svg>
        </div>
      </slide-thumb>
    </div>
    <div class="track"><div class="thumb"></div></div>
  </div>
`);

define("pane-grip", `
  <style>
    :host { display: flex; flex-direction: column; align-items: center; justify-content: center; gap: 8px; box-sizing: border-box; background: linear-gradient(90deg, #f5f5f5, #fff 50%, #dcdcdc); border-inline: 1px solid #a9a9ad; }
    :host([row]) { flex-direction: row; padding-left: 192px; background: linear-gradient(#fff, #e6e6e6); border: 0; border-bottom: 1px solid #b4b4b4; }
    i { width: 7px; height: 7px; box-sizing: border-box; border: 1px solid #858585; border-radius: 50%; background: #ccc; }
  </style>
  <i></i><i></i><i></i>
`);

/* ---------- editor ---------- */

define("title-slide", `
  <style>
    :host { display: grid; grid-template: 479fr 230fr 33fr / minmax(0, 1fr); aspect-ratio: 989 / 742; background: #fff; box-shadow: 0 0 0 2px #5f708d, 2px 4px 6px #33405a; font-family: "Liberation Sans", sans-serif; }
    .top { display: flex; justify-content: space-between; align-items: flex-end; padding: 0 86px 60px 64px; background: var(--orange); border-bottom: 2px solid #7d7068; }
    h1 { margin: 0 0 20px; font-size: 38px; line-height: 48px; color: #fff; white-space: nowrap; }
    .low { position: relative; display: grid; grid-template: 1fr 38px / minmax(0, 1fr); min-height: 0; }
    .bar { position: absolute; top: -18px; left: 195px; right: 0; height: 29px; box-sizing: border-box; padding-right: 79px; background: #141414; clip-path: polygon(27px 0, 100% 0, 100% 100%, 0 100%); text-align: right; font-size: 16px; line-height: 30px; color: #ddd; }
    .logos, .lines { grid-area: 1 / 1; }
    .logos { display: flex; align-items: flex-start; gap: 9px; padding: 26px 0 0 23px; }
    gesa-logo { margin-top: 8px; }
    .lines { padding: 43px 39px 0 0; text-align: right; font-size: 22px; line-height: 29px; color: #111; }
    p { margin: 0 0 10px; }
    p:last-child { margin: 0; }
    u { text-decoration: underline wavy #d33 1px; text-underline-offset: 3px; }
    .code { align-self: start; margin: 0 77px 0 79px; border: 1px solid #888; text-align: center; font: 10px/24px Lato, sans-serif; color: #333; white-space: nowrap; }
    footer { padding-right: 78px; background: var(--orange); border-top: 2px solid #7d7068; text-align: right; font-weight: bold; font-size: 13px; line-height: 30px; color: #fff; }
  </style>
  <div class="top"><ashm-logo></ashm-logo><h1>Pregnant women and HBV</h1></div>
  <div class="low">
    <div class="bar">Supporting the HIV, Viral Hepatitis and Sexual Health Workforce</div>
    <div class="logos"><gesa-logo></gesa-logo><asid-logo></asid-logo></div>
    <div class="lines">
      <p><b>Written by:</b> Dr Miriam Levy</p>
      <p><b>Presented by:</b> Associate Professor Steven Tong,</p>
      <p><u>Infectious</u> Diseases Physician, Victorian Infectious Diseases Service,<br>Royal Melbourne Hospital at the Doherty Institute for Infection and Immunity</p>
    </div>
    <div class="code">ASHM is a signatory to the ACFID Code of Conduct and is committed to the principles of the Ottawa Charter for health promotion and the Jakarta Declaration on health promotion.</div>
  </div>
  <footer>© ASHM 2016</footer>
`);

define("slide-editor", `
  <style>
    :host { display: grid; grid-template: auto 18px 1fr / minmax(0, 1fr); min-width: 0; }
    .canvas { padding: 27px 219px 24px 385px; background: linear-gradient(#7e879a, #a9b1c1 8px, #a4acbc 30%, #8993a3); }
    .notes { box-sizing: border-box; width: 100%; padding: 9px 13px; border: 0; resize: none; background: #fff; font: 23px/28px "Liberation Sans", sans-serif; color: #222; }
  </style>
  <div class="canvas"><title-slide></title-slide></div>
  <pane-grip row></pane-grip>
  <textarea class="notes" aria-label="Notes">Click to add notes</textarea>
`);

/* ---------- status bar ---------- */

define("status-bar", `
  <style>
    :host { display: grid; grid-template-columns: 182px 1fr 240px 201px; height: 52px; box-sizing: border-box; border-top: 2px solid #7c7c7c; background: #fff; font-size: var(--status-size); color: #6f6f6f; }
    .views, .blank, .count, .zoom { min-width: 0; border-right: 2px solid #7c7c7c; box-sizing: border-box; }
    .views { display: flex; align-items: center; padding-left: 8px; background: #f7f7f7; }
    .set { display: flex; border: 2px solid #9a9a9a; border-radius: 5px; overflow: hidden; }
    .set button { display: grid; place-items: center; width: 52px; height: 38px; padding: 0; border: 0; background: linear-gradient(#fbfbfb, #e0e0e0); }
    .set button + button { border-left: 2px solid #9a9a9a; }
    .set button:first-child { background: linear-gradient(#8d9296, #aaaeb1); }
    .blank, .count, .zoom { padding-bottom: 2px; background: linear-gradient(#eef0f3, #e8eaed 50%, #dadcde 52%, #dfe0e2 90%, #fff); }
    .count { display: grid; place-items: center; padding-right: 8px; font-size: 22px; }
    .zoom { display: flex; align-items: center; gap: 27px; padding-left: 31px; border: 0; overflow: hidden; }
    input { appearance: none; flex: none; width: 183px; height: 24px; margin: 0; background: linear-gradient(#a5a5a5, #b3b3b3) center / 100% 6px no-repeat; }
    input::-webkit-slider-thumb { appearance: none; width: 23px; height: 23px; border: 2px solid #666; border-radius: 50%; background: radial-gradient(circle, #222 3px, #d5d5d5 5px, #c2c2c2); }
  </style>
  <div class="views">
    <div class="set">
      <button aria-label="Normal view"><ui-icon name="normal"></ui-icon></button><button aria-label="Slide sorter"><ui-icon name="sorter"></ui-icon></button><button aria-label="Slide show"><ui-icon name="show"></ui-icon></button>
    </div>
  </div>
  <div class="blank"></div>
  <div class="count">Slide 1 of 32</div>
  <div class="zoom"><label for="zoom">73%</label><input id="zoom" type="range" min="10" max="400" value="73"></div>
`);

define("mouse-pointer", `
  <style>
    :host { position: absolute; left: 197px; top: 99px; pointer-events: none; }
    svg { display: block; }
  </style>
  <svg width="22" height="36" viewBox="0 0 22 36"><path d="M1 1v27l6-6 5 12 5-2-5-11h9z" fill="#000" stroke="#fff" stroke-width="2"/></svg>
`);

define("app-window", `
  <style>
    :host { display: block; height: 100vh; box-sizing: border-box; padding: 0 230px 2px 228px; }
    .window { position: relative; display: grid; grid-template: auto auto auto minmax(0, 1fr) auto / minmax(0, 1fr); height: 100%; border-radius: 8px 0 0 0; background: #f5f5f5; overflow: hidden; }
    .work { display: grid; grid-template: minmax(0, 1fr) / 330px 19px minmax(0, 1fr); min-height: 0; }
  </style>
  <div class="window">
    <title-bar>Complex HBV webinar_HBV in pregnancy.pptx</title-bar>
    <tool-bar></tool-bar>
    <app-ribbon></app-ribbon>
    <div class="work"><slide-panel></slide-panel><pane-grip></pane-grip><slide-editor></slide-editor></div>
    <status-bar></status-bar>
    <mouse-pointer></mouse-pointer>
  </div>
`);
</script>
</body>
</html>
